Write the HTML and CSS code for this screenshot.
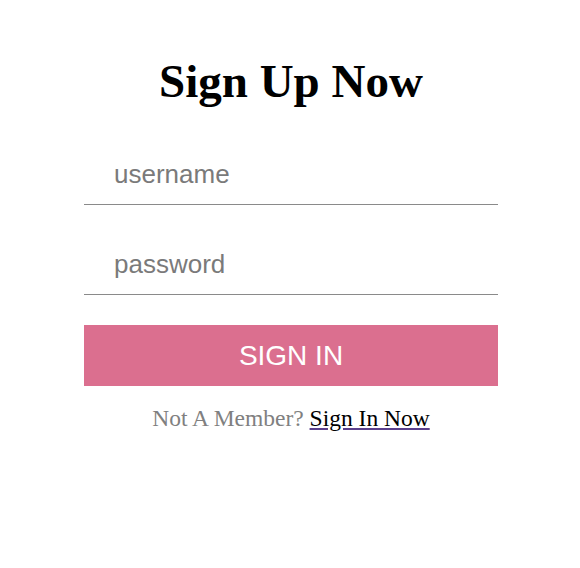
FILE: index.html
```html
<!DOCTYPE html>
<html lang="en">
<head>
  <meta charset="UTF-8" />
  <title>Sign Up</title>
  <link rel="stylesheet" href="styles.css">
</head>
<body>

<div class="signup">
  <h1>Sign Up Now</h1>
  <form class="signup-form" onsubmit="return false;">
    <input type="text" class="field" placeholder="username" />
    <input type="password" class="field" placeholder="password" />
    <button type="submit" class="btn">SIGN IN</button>
  </form>
  <p class="member">Not A Member? <a href="#">Sign In Now</a></p>
</div>

</body>
</html>
```

FILE: styles.css
```css
body {
  margin: 0;
  padding-left: 2px;
  background: #fff;
  font-family: "Liberation Serif", "Times New Roman", serif;
}
.signup {
  width: 414px;
  margin: 0 auto;
  padding-top: 54px;
}
.signup h1 {
  margin: 0 0 37px 0;
  font-size: 47px;
  font-weight: bold;
  line-height: normal;
  text-align: center;
  color: #000;
}
.signup-form {
  display: flex;
  flex-direction: column;
  gap: 30px;
}
.field {
  box-sizing: border-box;
  width: 100%;
  height: 60px;
  padding: 0 0 0 30px;
  border: none;
  border-bottom: 1px solid #8a8a8a;
  outline: none;
  font-family: "Liberation Sans", Arial, sans-serif;
  font-size: 26px;
  color: #333;
}
.field::placeholder {
  color: #7a7a7a;
}
.btn {
  height: 61px;
  border: none;
  background: #db6f8f;
  color: #fff;
  font-family: "Liberation Sans", Arial, sans-serif;
  font-size: 28px;
  cursor: pointer;
}
.member {
  margin: 19px 0 0 0;
  font-size: 23.5px;
  text-align: center;
  color: #808080;
}
.member a {
  color: #000;
  text-decoration-color: #5b3f8c;
}
```
